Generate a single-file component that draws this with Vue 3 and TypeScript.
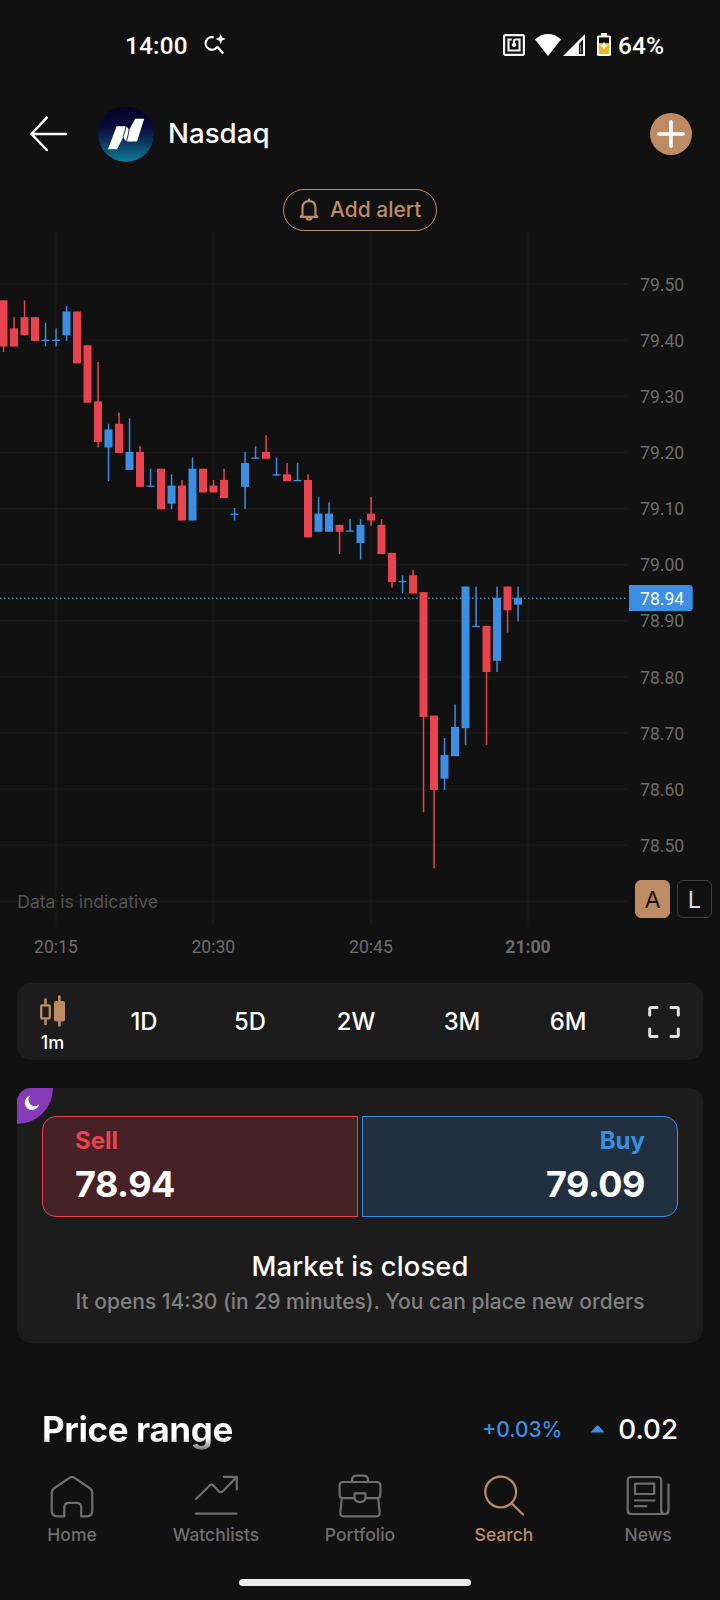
<script setup lang="ts">
type Candle = [open: number, high: number, low: number, close: number]

// Minute candles from 20:10, in cents
const candles: Candle[] = [
  [7947, 7947, 7938, 7939], [7942, 7944, 7939, 7939], [7944, 7947, 7941, 7941], [7944, 7944, 7940, 7940],
  [7940, 7943, 7939, 7940], [7940, 7942, 7939, 7940], [7941, 7946, 7940, 7945], [7945, 7945, 7936, 7936],
  [7939, 7939, 7929, 7929], [7929, 7936, 7921, 7922], [7921, 7925, 7915, 7924], [7925, 7927, 7920, 7920],
  [7917, 7926, 7917, 7920], [7920, 7921, 7914, 7914], [7914, 7917, 7914, 7914], [7917, 7917, 7910, 7910],
  [7911, 7916, 7910, 7914], [7914, 7915, 7908, 7908], [7908, 7919, 7908, 7917], [7917, 7917, 7913, 7913],
  [7914, 7915, 7913, 7913], [7915, 7917, 7912, 7912], [7909, 7910, 7908, 7909], [7914, 7920, 7910, 7918],
  [7919, 7921, 7919, 7919], [7920, 7923, 7919, 7919], [7916, 7919, 7916, 7916], [7916, 7918, 7915, 7915],
  [7915, 7918, 7915, 7915], [7915, 7916, 7905, 7905], [7906, 7912, 7906, 7909], [7906, 7911, 7906, 7909],
  [7907, 7907, 7902, 7906], [7906, 7908, 7906, 7906], [7904, 7908, 7901, 7907], [7909, 7912, 7907, 7908],
  [7907, 7908, 7902, 7902], [7902, 7902, 7896, 7897], [7897, 7898, 7895, 7897], [7898, 7899, 7895, 7895],
  [7895, 7895, 7856, 7873], [7873, 7873, 7846, 7860], [7862, 7869, 7860, 7866], [7866, 7875, 7866, 7871],
  [7871, 7896, 7868, 7896], [7889, 7896, 7889, 7889], [7889, 7889, 7868, 7881], [7883, 7896, 7881, 7894],
  [7896, 7896, 7888, 7892], [7893, 7896, 7890, 7894],
]

const chartTop = 231
const yOf = (cents: number) => 284.1 - chartTop + (7950 - cents) * 5.612
const bars = candles.map(([o, h, l, c], i) => {
  const x = 3.5 + i * 10.5
  const top = yOf(Math.max(o, c)) - 0.6
  const bottom = yOf(Math.min(o, c)) + 0.7
  return { x, top, height: bottom - top, high: yOf(h) - 0.6, low: yOf(l) + 0.6, color: o > c ? '#e8434f' : '#3b8ee2' }
})

const priceLabels = Array.from({ length: 11 }, (_, i) => 7950 - i * 10)
const priceLines = [...priceLabels, 7840]
const times = [
  { label: '20:15', x: 56, bold: false },
  { label: '20:30', x: 213.3, bold: false },
  { label: '20:45', x: 371, bold: false },
  { label: '21:00', x: 528, bold: true },
]
const ranges = ['1D', '5D', '2W', '3M', '6M']
</script>

<template>
  <div class="screen">
    <div class="status">
      <span class="clock">14:00</span>
      <svg class="spark" width="24" height="24" viewBox="0 0 24 24" fill="none">
        <path d="M10.6 3.3A6.3 6.3 0 1 0 14.2 12.8M14 12.6L20.2 19.6" stroke="#fff" stroke-width="2.3" />
        <path d="M17.600 -.2L19 3.500 22.800 5 19 6.400 17.600 10.200 16.200 6.400 12.400 5 16.200 3.500z" fill="#fff" />
      </svg>
      <div class="grow"></div>
      <svg class="nfc" width="22" height="22" viewBox="2 2 20 20" fill="#f2f2f2">
        <path d="M20 2H4c-1.100 0-2 .900-2 2v16c0 1.100.900 2 2 2h16c1.100 0 2-.900 2-2V4c0-1.100-.900-2-2-2zm0 18H4V4h16v16z" />
        <path d="M18 6h-5c-1.100 0-2 .900-2 2v2.280c-.600.350-1 .980-1 1.720 0 1.100.900 2 2 2s2-.900 2-2c0-.740-.400-1.380-1-1.720V8h3v8H8V8h2V6H6v12h12V6z" />
      </svg>
      <svg class="wifi" width="26" height="22" viewBox="0 0 26 22">
        <path d="M13 22L0 5.600Q5.500 0 13 0T26 5.600z" fill="#fff" />
      </svg>
      <svg class="signal" width="22" height="22" viewBox="0 0 22 22">
        <path fill="#fff" fill-rule="evenodd" d="M22 0V22H0zM16 10V20H20V5.500z" />
        <path d="M17.600 11V19" stroke="#fff" stroke-width=".500" />
      </svg>
      <svg class="battery" width="14" height="23" viewBox="0 0 14 23">
        <path d="M4 0H10V2.400H12.500Q14 2.400 14 4V21.500Q14 23 12.500 23H1.500Q0 23 0 21.500V4Q0 2.400 1.500 2.400H4z" fill="#fff" />
        <rect x="2" y="4.400" width="10" height="5.600" fill="#111" />
        <rect x="2" y="10" width="10" height="11" fill="#f3b61f" />
        <path d="M7 8.500L8.200 11.400 11 12.700 8.200 14 7 16.900 5.800 14 3 12.700 5.800 11.400z" fill="#fff" />
      </svg>
      <span class="pct">64%</span>
    </div>

    <header class="header">
      <svg class="back" width="38" height="36" viewBox="0 0 38 36" fill="none" stroke="#fff" stroke-width="2.500" stroke-linecap="round" stroke-linejoin="round">
        <path d="M16.800 1.700L1.500 18 16.800 34M1.500 18H36" />
      </svg>
      <svg class="logo" width="56" height="56" viewBox="0 0 56 56">
        <defs>
          <linearGradient id="logoFill" x1="0" y1="0" x2="0" y2="1">
            <stop offset="0" stop-color="#070426" />
            <stop offset=".38" stop-color="#0b0a3c" />
            <stop offset=".7" stop-color="#0c3f66" />
            <stop offset="1" stop-color="#0b7f9f" />
          </linearGradient>
        </defs>
        <circle cx="28" cy="28" r="27.800" fill="url(#logoFill)" />
        <path d="M18.600 20.300H27Q30 20.700 30.800 24.500L37.200 12.800H46.200L39 35.400H29.500Q26 34.800 25.600 30.500L19 43.200H10z" fill="#fff" />
        <path d="M28.200 20.600L25.200 30.800M31.200 24L28.700 34.800" stroke="#0b1744" stroke-width=".9" />
      </svg>
      <h1>Nasdaq</h1>
      <div class="grow"></div>
      <svg class="add" width="42" height="42" viewBox="0 0 42 42">
        <circle cx="21" cy="21" r="21" fill="#bd8c64" />
        <path d="M21 8.800V33.200M8.800 21H33.200" stroke="#fff" stroke-width="3.600" stroke-linecap="round" />
      </svg>
    </header>

    <div class="alertrow">
      <button class="alert">
        <svg width="20" height="23" viewBox="0 0 20 23" fill="none" stroke="#bd8c64" stroke-width="2.200" stroke-linejoin="round">
          <path d="M10 .600V3M3.500 17V10Q3.500 3.200 10 3.200T16.500 10V17L18.300 18.800H1.700z" />
          <path d="M7.600 19.500Q7.600 21.600 10 21.600T12.400 19.500" />
        </svg>
        <span>Add alert</span>
      </button>
    </div>

    <section class="chart">
      <svg width="720" height="740" viewBox="0 0 720 740">
        <g stroke="#181818" stroke-width="1.600">
          <line v-for="p in priceLines" :key="p" x1="0" x2="627" :y1="yOf(p)" :y2="yOf(p)" />
          <line v-for="t in times" :key="t.x" :x1="t.x" :x2="t.x" y1="1" y2="692" />
        </g>
        <line x1="0" x2="628" y1="367.200" y2="367.200" stroke="#4a82b8" stroke-width="1.500" stroke-dasharray="1.500 2.500" />
        <g v-for="b in bars" :key="b.x">
          <rect :x="b.x - 0.7" :y="b.high" width="1.500" :height="b.low - b.high" :fill="b.color" />
          <rect :x="b.x - 4" :y="b.top" width="8" :height="b.height" :fill="b.color" />
        </g>
        <g class="axis">
          <text v-for="p in priceLabels" :key="p" x="640" :y="yOf(p) + 6.6">{{ (p / 100).toFixed(2) }}</text>
          <text v-for="t in times" :key="t.label" :x="t.x" y="722.300" text-anchor="middle" :class="{ bold: t.bold }">{{ t.label }}</text>
        </g>
        <path d="M629 354H689.500Q692.700 354 692.700 357V377Q692.700 380 689.500 380H629z" fill="#3b8ee2" />
        <text class="last" x="640" y="374.300">78.94</text>
        <text class="note" x="17.300" y="676.700">Data is indicative</text>
      </svg>
      <div class="modes">
        <span class="mode on">A</span>
        <span class="mode">L</span>
      </div>
    </section>

    <nav class="ranges">
      <div class="interval">
        <svg width="26" height="32" viewBox="0 0 26 32">
          <path d="M5.500 4.500V9M5.500 25V29" stroke="#bd8c64" stroke-width="2.600" stroke-linecap="round" />
          <rect x="1.200" y="10.400" width="8.600" height="13" rx="1" fill="none" stroke="#bd8c64" stroke-width="2.300" />
          <path d="M19.400 1.500V30.500" stroke="#bd8c64" stroke-width="2.600" stroke-linecap="round" />
          <rect x="14" y="6" width="11" height="20.500" rx="2" fill="#bd8c64" />
        </svg>
        <span>1m</span>
      </div>
      <span v-for="r in ranges" :key="r" class="range">{{ r }}</span>
      <svg class="full" width="32" height="32" viewBox="0 0 32 32" fill="none" stroke="#e2e2e2" stroke-width="3" stroke-linecap="round" stroke-linejoin="round">
        <path d="M1.700 9V3Q1.700 1.600 3.100 1.600H9M23 1.600H28.900Q30.300 1.600 30.300 3V9M30.300 23V29Q30.300 30.400 28.900 30.400H23M9 30.400H3.100Q1.700 30.400 1.700 29V23" />
      </svg>
    </nav>

    <section class="trade">
      <div class="night">
        <svg width="16" height="16" viewBox="0 0 16 16"><path d="M6.300 .600A7.300 7.300 0 1 0 15.200 9.300A5.900 5.900 0 0 1 6.300 .600z" fill="#fff" /></svg>
      </div>
      <div class="quotes">
        <div class="quote sell"><span>Sell</span><strong>78.94</strong></div>
        <div class="quote buy"><span>Buy</span><strong>79.09</strong></div>
      </div>
      <h2>Market is closed</h2>
      <p>It opens 14:30 (in 29 minutes). You can place new orders</p>
    </section>

    <section class="pricerange">
      <h3>Price range</h3>
      <div class="grow"></div>
      <span class="delta">+0.03%</span>
      <svg width="13" height="8" viewBox="0 0 13 8"><path d="M0 7.500Q0 6.900 .8 6L5.500 .800Q6.500 0 7.500 .800L12.200 6Q13 6.900 13 7.500z" fill="#3b8ee2" /></svg>
      <span class="change">0.02</span>
    </section>

    <footer class="tabs">
      <div class="tab">
        <svg viewBox="0 0 44 44"><path d="M19.800 2.700Q22 1.200 24.200 2.700L39.500 13Q42.300 15 42.300 18.500V35.500Q42.300 41.300 36.500 41.300H31.200V32.500Q31.200 27.800 26.500 27.800H19Q14.300 27.800 14.300 32.500V41.300H7.700Q1.700 41.300 1.700 35.500V18.500Q1.700 15 4.500 13z" /></svg>
        <span>Home</span>
      </div>
      <div class="tab">
        <svg viewBox="0 0 44 44"><path d="M2 24L15.500 10.700Q17.600 8.600 19.600 10.700L24.800 16.200Q26.800 18.300 28.800 16.300L42 2.700M29.800 1.800H42.800V14.500M1.800 38.600H42.500" /></svg>
        <span>Watchlists</span>
      </div>
      <div class="tab">
        <svg viewBox="0 0 44 44"><path d="M14 7V5.500Q14 .7 18.500 .7H25.500Q30 .7 30 5.500V7M5 7H39Q42.400 7 42.400 10.500V19.500Q42.400 23.200 39 23.200H28M16 23.200H5Q1.600 23.200 1.600 19.500V10.500Q1.600 7 5 7M16.500 18.300H27.500V22Q27.500 27 22 27T16.500 22zM3.900 23.200L2.300 37.500Q2 41.300 5.500 41.300H38.500Q42 41.300 41.700 37.500L40.100 23.200" /></svg>
        <span>Portfolio</span>
      </div>
      <div class="tab active">
        <svg viewBox="0 0 44 44"><circle cx="18.700" cy="17" r="15.400" /><path d="M29.500 28.200L41 39.500" /></svg>
        <span>Search</span>
      </div>
      <div class="tab">
        <svg viewBox="0 0 44 44"><path d="M35.200 35.500V5.500Q35.200 2 31.700 2H5.200Q1.700 2 1.700 5.500V35.500Q1.700 39 5.200 39H39.000Q42.500 39 42.500 35.500V9.500M35.200 35.500Q35.200 39 38.800 39M9 8.600H28.200V19H9zM9 25.500H28.500M9 31.200H20.500" /></svg>
        <span>News</span>
      </div>
    </footer>
    <div class="handle"></div>
  </div>
</template>

<style>
body {
  background: #111111;
}
</style>

<style scoped>
.screen {
  width: 720px;
  height: 1600px;
  overflow: hidden;
  background: #111111;
  color: #fff;
  font-family: Inter, "Liberation Sans", sans-serif;
  display: flex;
  flex-direction: column;
}
.screen * {
  box-sizing: border-box;
}
svg {
  display: block;
  flex: none;
  overflow: visible;
}
h1, h2, h3, p {
  margin: 0;
}
.grow {
  flex: 1;
}
.status {
  height: 90px;
  padding: 0 56px 0 125px;
  display: flex;
  align-items: center;
  font-family: Roboto, sans-serif;
  font-weight: 500;
  flex: none;
}
.clock {
  font-size: 24.300px;
  letter-spacing: 0.200px;
}
.spark {
  margin-left: 15px;
  margin-top: 2px;
}
.nfc {
  margin-right: 10px;
}
.signal {
  margin-left: 2px;
  margin-right: 12px;
}
.battery {
  margin-right: 7px;
  margin-top: -2px;
}
.pct {
  font-size: 24.500px;
  margin-top: 1px;
}
.header {
  height: 87px;
  padding: 0 28px 0 29.500px;
  display: flex;
  align-items: center;
  flex: none;
}
.logo {
  margin-left: 30.500px;
}
h1 {
  margin-left: 14px;
  font-size: 27.700px;
  font-weight: 500;
  line-height: 1;
}
.alertrow {
  height: 54px;
  padding-top: 12px;
  display: flex;
  justify-content: center;
  flex: none;
}
.alert {
  width: 154px;
  height: 42px;
  padding: 0 14.500px 1px 15px;
  border: 1.500px solid #bd8c64;
  border-radius: 21px;
  background: transparent;
  color: #bd8c64;
  font: 500 21px Inter, sans-serif;
  display: flex;
  align-items: center;
  justify-content: space-between;
  white-space: nowrap;
}
.chart {
  position: relative;
  height: 752px;
  flex: none;
}
.axis, .last {
  font-family: Roboto, sans-serif;
  font-size: 17.600px;
  fill: #6c6c6c;
}
.last {
  fill: #fff;
}
.bold {
  font-weight: 700;
}
.note {
  font-size: 17.500px;
  fill: #545454;
}
.modes {
  position: absolute;
  right: 8px;
  top: 649px;
  display: flex;
  gap: 7px;
}
.mode {
  width: 35px;
  height: 38px;
  border: 1.500px solid #3d3d3d;
  border-radius: 6px;
  background: #111;
  color: #ddd;
  font-size: 23.500px;
  display: flex;
  align-items: center;
  justify-content: center;
}
.mode.on {
  background: #bd8c64;
  border-color: #bd8c64;
  color: #1b140e;
}
.ranges {
  height: 77px;
  margin: 0 17px;
  padding: 0 23px 0 16px;
  border-radius: 14px;
  background: #1c1c1c;
  display: flex;
  align-items: center;
  flex: none;
}
.interval {
  width: 38px;
  display: flex;
  flex-direction: column;
  align-items: center;
  gap: 5px;
  padding: 5px 0 0 1px;
  margin-right: 20px;
  font-size: 18px;
  font-weight: 500;
  line-height: 22px;
}
.range {
  width: 106px;
  text-align: center;
  font-size: 23.800px;
  font-weight: 500;
}
.full {
  margin-left: auto;
}
.trade {
  position: relative;
  height: 255px;
  margin: 28px 17px 0;
  padding: 28px 25px 0;
  border-radius: 14px;
  background: #1c1c1c;
  text-align: center;
  flex: none;
}
.night {
  position: absolute;
  left: 0;
  top: 0;
  width: 36px;
  height: 36px;
  padding: 7px 0 0 7px;
  border-radius: 14px 0 36px 0;
  background: #883bb8;
}
.quotes {
  display: flex;
  gap: 4px;
}
.quote {
  flex: 1;
  height: 101px;
  padding: 11px 32px 0;
  display: flex;
  flex-direction: column;
  border: 1.500px solid;
}
.quote span {
  font-size: 24px;
  font-weight: 700;
  line-height: 26px;
}
.quote strong {
  margin-top: 8px;
  font-size: 36px;
  line-height: 44px;
  font-weight: 700;
  letter-spacing: -0.500px;
  color: #fff;
}
.sell {
  text-align: left;
  color: #e8434f;
  background: #462126;
  border-radius: 14px 0 0 14px;
}
.buy {
  text-align: right;
  color: #3b8ee2;
  background: #213040;
  border-radius: 0 14px 14px 0;
}
h2 {
  margin-top: 34px;
  font-size: 27.300px;
  font-weight: 500;
  letter-spacing: 0.180px;
  line-height: 32px;
}
.trade p {
  margin-top: 4px;
  font-size: 21px;
  font-weight: 500;
  line-height: 30px;
  color: #808080;
  white-space: nowrap;
}
.pricerange {
  height: 60px;
  margin-top: 56px;
  padding: 0 42px;
  display: flex;
  align-items: center;
  flex: none;
}
h3 {
  font-size: 35px;
  line-height: 44px;
  font-weight: 700;
  letter-spacing: -0.400px;
  background: linear-gradient(#fff 31px, #666 44px);
  background-clip: text;
  color: transparent;
}
.delta {
  color: #3b8ee2;
  font-size: 20.900px;
  font-weight: 500;
  margin-right: 29px;
}
.change {
  margin-left: 14px;
  font-size: 27.700px;
  font-weight: 500;
}
.tabs {
  height: 114px;
  padding-top: 16px;
  display: flex;
  flex: none;
}
.tab {
  width: 144px;
  display: flex;
  flex-direction: column;
  align-items: center;
  gap: 4px;
  color: #6e6e6e;
  font-size: 17.500px;
  line-height: 24px;
  font-weight: 500;
}
.tab svg {
  width: 44px;
  height: 44px;
  fill: none;
  stroke: currentColor;
  stroke-width: 2.200;
  stroke-linecap: round;
  stroke-linejoin: round;
}
.tab.active {
  color: #bd8c64;
}
.handle {
  width: 232px;
  height: 7px;
  margin: 6px auto 0 239px;
  border-radius: 4px;
  background: #ececec;
  flex: none;
}
</style>
